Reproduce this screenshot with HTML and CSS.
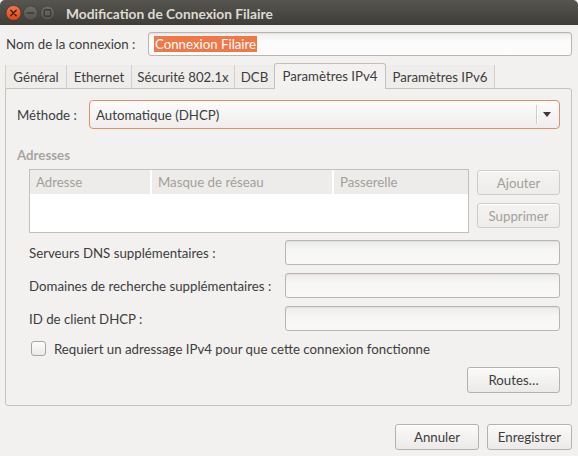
FILE: index.html
```html
<!DOCTYPE html>
<html lang="fr">
<head>
<meta charset="utf-8">
<title>Modification de Connexion Filaire</title>
<link rel="stylesheet" href="styles.css">
</head>
<body>
<div class="window">
  <div class="titlebar">
    <div class="wm-buttons">
      <svg width="56" height="25" viewBox="0 0 56 25">
        <defs>
          <linearGradient id="gc" x1="0" y1="0" x2="0" y2="1">
            <stop offset="0" stop-color="#f4764b"/>
            <stop offset="1" stop-color="#d9471a"/>
          </linearGradient>
          <linearGradient id="gg" x1="0" y1="0" x2="0" y2="1">
            <stop offset="0" stop-color="#6f6d67"/>
            <stop offset="1" stop-color="#55534e"/>
          </linearGradient>
        </defs>
        <circle cx="13.5" cy="13" r="7.5" fill="url(#gc)" stroke="#3a2a22" stroke-width="0.6"/>
        <path d="M10.8 10.3 L16.2 15.7 M16.2 10.3 L10.8 15.7" stroke="#3b1d10" stroke-width="1.3" stroke-linecap="round"/>
        <circle cx="30.5" cy="13" r="7" fill="url(#gg)" stroke="#3a3935" stroke-width="0.6"/>
        <path d="M27 13 H34" stroke="#3c3b37" stroke-width="1.6" stroke-linecap="round"/>
        <circle cx="47.5" cy="13" r="7" fill="url(#gg)" stroke="#3a3935" stroke-width="0.6"/>
        <rect x="44.3" y="9.8" width="6.4" height="6.4" rx="1" fill="none" stroke="#3c3b37" stroke-width="1.4"/>
      </svg>
    </div>
    <div class="title">Modification de Connexion Filaire</div>
  </div>

  <div class="content">
    <div class="name-row">
      <span class="label">Nom de la connexion :</span>
      <div class="entry name-entry"><span class="selected">Connexion Filaire</span></div>
    </div>

    <div class="notebook">
      <div class="tabs">
        <div class="tab t-general">Général</div>
        <div class="tab t-ethernet">Ethernet</div>
        <div class="tab t-securite">Sécurité 802.1x</div>
        <div class="tab t-dcb">DCB</div>
        <div class="tab t-ipv4 active">Paramètres IPv4</div>
        <div class="tab t-ipv6">Paramètres IPv6</div>
      </div>
      <div class="panel">
        <div class="method-row">
          <span class="label">Méthode :</span>
          <div class="combo">
            <span class="combo-text">Automatique (DHCP)</span>
            <span class="combo-sep"></span>
            <span class="combo-arrow"></span>
          </div>
        </div>

        <div class="section-title">Adresses</div>

        <div class="addr-row">
          <div class="addr-table">
            <div class="addr-head">
              <div class="col c1">Adresse</div>
              <div class="col c2">Masque de réseau</div>
              <div class="col c3">Passerelle</div>
            </div>
            <div class="addr-body"></div>
          </div>
          <div class="side-buttons">
            <div class="button disabled">Ajouter</div>
            <div class="button disabled">Supprimer</div>
          </div>
        </div>

        <div class="form-grid">
          <span class="label">Serveurs DNS supplémentaires :</span>
          <div class="entry"></div>
          <span class="label">Domaines de recherche supplémentaires :</span>
          <div class="entry"></div>
          <span class="label">ID de client DHCP :</span>
          <div class="entry"></div>
        </div>

        <div class="check-row">
          <span class="checkbox"></span>
          <span class="label">Requiert un adressage IPv4 pour que cette connexion fonctionne</span>
        </div>

        <div class="routes-row">
          <div class="button routes">Routes…</div>
        </div>
      </div>
    </div>

    <div class="actions">
      <div class="button action">Annuler</div>
      <div class="button action">Enregistrer</div>
    </div>
  </div>
</div>
</body>
</html>
```

FILE: styles.css
```css
* { box-sizing: border-box; }

html, body {
  margin: 0;
  padding: 0;
}

body {
  width: 578px;
  height: 456px;
  overflow: hidden;
  background: #f2f1f0;
  font-family: Lato, "Liberation Sans", sans-serif;
  font-size: 13.25px;
  color: #3c3c3c;
}

.window {
  width: 578px;
  height: 456px;
  background: #f2f1f0;
}

/* ---------- title bar ---------- */
.titlebar {
  height: 25px;
  display: flex;
  align-items: center;
  background: linear-gradient(#57554f, #3e3d39);
  border-top-left-radius: 5px;
  border-top-right-radius: 5px;
}

.wm-buttons {
  width: 66px;
  height: 25px;
  display: flex;
}

.title {
  font-weight: bold;
  font-size: 13.75px;
  color: #dfdbd2;
  padding-top: 1px;
}

/* ---------- content ---------- */
.content {
  padding: 7px 6px 0 5px;
}

.name-row {
  display: grid;
  grid-template-columns: 142px 1fr;
  align-items: center;
  padding-left: 1px;
}

.entry {
  height: 24px;
  border: 1px solid #b9b6b0;
  border-radius: 3px;
  background: linear-gradient(#ecebe9, #f6f6f5 40%, #f8f8f7);
  box-shadow: inset 0 1px 1px rgba(0,0,0,0.06);
}

.name-entry {
  display: flex;
  align-items: center;
  padding-left: 5px;
  background: linear-gradient(#f1f0ee, #fbfbfb 40%, #fcfcfc);
}

.selected {
  background: #f07746;
  color: #ffffff;
  line-height: 16px;
  padding: 0 1px;
}

/* ---------- notebook ---------- */
.notebook {
  margin-top: 7px;
}

.tabs {
  display: flex;
  align-items: flex-end;
  height: 25px;
}

.tab {
  height: 23px;
  display: flex;
  align-items: center;
  justify-content: center;
  border-right: 1px solid #d3d0cc;
  background: #eeedeb;
  color: #3c3c3c;
  white-space: nowrap;
}

.tab:first-child {
  border-left: 1px solid #d3d0cc;
}

.t-general { width: 62px; }
.t-ethernet { width: 65px; }
.t-securite { width: 103px; }
.t-dcb { width: 40px; }
.t-ipv4 { width: 112px; }
.t-ipv6 { width: 109px; }

.tab.active {
  height: 26px;
  margin-bottom: -1px;
  position: relative;
  z-index: 1;
  background: #f3f2f1;
  border: 1px solid #c3c0bb;
  border-bottom: none;
  border-radius: 3px 3px 0 0;
  padding-bottom: 2px;
  margin-left: -1px;
}

.panel {
  height: 318px;
  border: 1px solid #c6c3be;
  border-radius: 0 3px 3px 3px;
  padding: 11px 11px 0 11px;
  background: #f2f1f0;
}

.method-row {
  display: grid;
  grid-template-columns: 72px 1fr;
  align-items: center;
}

.combo {
  height: 29px;
  border: 1px solid #e38d6c;
  border-radius: 4px;
  background: linear-gradient(#fcfcfc, #efeeec);
  display: flex;
  align-items: center;
  padding-left: 6px;
}

.combo-text {
  flex: 1;
}

.combo-sep {
  width: 1px;
  height: 19px;
  background: #d2cfcb;
  box-shadow: 1px 0 0 #fff;
}

.combo-arrow {
  width: 0;
  height: 0;
  margin: 0 8px 0 6px;
  border-left: 4.5px solid transparent;
  border-right: 4.5px solid transparent;
  border-top: 5px solid #3c3c3c;
}

.section-title {
  margin-top: 18px;
  line-height: 17px;
  font-weight: bold;
  color: #a8a49f;
}

.addr-row {
  display: flex;
  gap: 8px;
  margin-top: 5px;
  padding-left: 12px;
}

.addr-table {
  width: 441px;
  height: 64px;
  border: 1px solid #c3c0bb;
  background: #ffffff;
}

.addr-head {
  display: flex;
  height: 24px;
  background: #edecea;
}

.col {
  display: flex;
  align-items: center;
  padding-left: 6px;
  color: #a29f9a;
  border-right: 2px solid #ffffff;
  white-space: nowrap;
}

.c1 { width: 122px; }
.c2 { width: 182px; }
.c3 { flex: 1; border-right: none; }

.side-buttons {
  display: flex;
  flex-direction: column;
  gap: 8px;
  margin-top: 1px;
  width: 83px;
}

.button {
  height: 25px;
  display: flex;
  align-items: center;
  justify-content: center;
  border: 1px solid #b5b2ac;
  border-radius: 3px;
  background: linear-gradient(#fafaf9, #eceae8);
  color: #3c3c3c;
  box-shadow: inset 0 1px 0 #ffffff;
}

.button.disabled {
  color: #a29f9a;
  border-color: #cfccc8;
  background: linear-gradient(#f4f3f2, #eeedeb);
}

.form-grid {
  display: grid;
  grid-template-columns: 1fr 275px;
  row-gap: 8px;
  align-items: center;
  margin-top: 7px;
  padding-left: 12px;
}

.form-grid .entry {
  height: 25px;
}

.check-row {
  display: flex;
  align-items: center;
  gap: 8px;
  margin-top: 9px;
  padding-left: 14px;
  height: 17px;
}

.checkbox {
  width: 15px;
  height: 15px;
  border: 1px solid #a9a6a1;
  border-radius: 3px;
  background: linear-gradient(#fbfbfb, #ebeae8);
}

.routes-row {
  display: flex;
  justify-content: flex-end;
  margin-top: 10px;
}

.button.routes {
  width: 93px;
  height: 26px;
}

.actions {
  display: flex;
  justify-content: flex-end;
  gap: 8px;
  margin-top: 18px;
}

.button.action {
  height: 26px;
}

.button.action:first-child { width: 84px; }
.button.action:last-child { width: 85px; }
```
